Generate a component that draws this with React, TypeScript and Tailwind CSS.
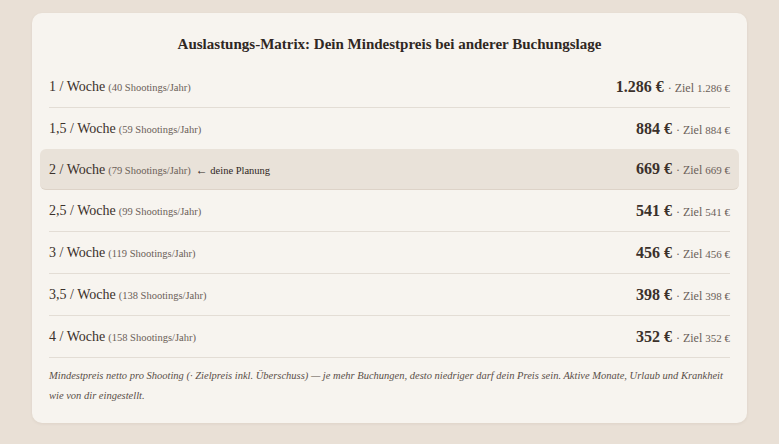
const rows = [
  { freq: '1', count: 40, price: '1.286' },
  { freq: '1,5', count: 59, price: '884' },
  { freq: '2', count: 79, price: '669', current: true },
  { freq: '2,5', count: 99, price: '541' },
  { freq: '3', count: 119, price: '456' },
  { freq: '3,5', count: 138, price: '398' },
  { freq: '4', count: 158, price: '352' },
];

export default function App() {
  return (
    <div className="min-h-screen bg-[#e9e0d6] px-8 py-[13px] font-['Liberation_Serif',serif] text-[#3b312b]">
      <div className="rounded-[10px] bg-[#f7f4ef] px-[17px] pt-[22px] pb-[17px] shadow-[0_1px_3px_rgba(90,70,50,0.08)]">
        <h2 className="text-center text-[15px] font-bold leading-[18px] text-[#2f2723]">
          Auslastungs-Matrix: Dein Mindestpreis bei anderer Buchungslage
        </h2>
        <div className="mt-[13px]">
          {rows.map((r) =>
            r.current ? (
              <div
                key={r.freq}
                className="-mx-[9px] -mt-px flex h-[41px] items-center justify-between rounded-[6px] border-b border-[#ddd3c8] bg-[#e9e2d9] px-[9px]"
              >
                <Label r={r} />
                <Price r={r} />
              </div>
            ) : (
              <div
                key={r.freq}
                className="flex h-[42px] items-center justify-between border-b border-[#e3ddd5]"
              >
                <Label r={r} />
                <Price r={r} />
              </div>
            )
          )}
        </div>
        <p className="mt-[8px] text-[10.5px] italic leading-[20px] text-[#5a4f48]">
          Mindestpreis netto pro Shooting (· Zielpreis inkl. Überschuss) — je mehr Buchungen, desto niedriger darf dein Preis sein. Aktive Monate, Urlaub und Krankheit wie von dir eingestellt.
        </p>
      </div>
    </div>
  );
}

function Label({ r }: { r: (typeof rows)[number] }) {
  return (
    <div className="flex items-baseline gap-[3px]">
      <span className="text-[14px] text-[#3b312b]">{r.freq} / Woche</span>
      <span className="text-[10.5px] text-[#6b6058]">({r.count} Shootings/Jahr)</span>
      {r.current && (
        <span className="ml-[2px] text-[10.5px] text-[#2f2723]">
          <span className="text-[12px]">←</span> deine Planung
        </span>
      )}
    </div>
  );
}

function Price({ r }: { r: (typeof rows)[number] }) {
  return (
    <div className="flex items-baseline gap-[4px]">
      <span className="text-[16px] font-bold text-[#3b312b]">{r.price} €</span>
      <span className="text-[12px] text-[#6b6058]">
        · Ziel <span className="text-[11px]">{r.price} €</span>
      </span>
    </div>
  );
}
